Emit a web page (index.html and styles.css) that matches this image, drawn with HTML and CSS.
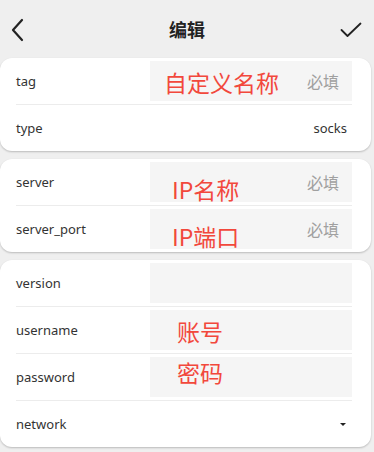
FILE: index.html
```html
<!DOCTYPE html>
<html lang="zh-CN">
<head>
    <meta charset="UTF-8">
    <meta name="viewport" content="width=device-width, initial-scale=1.0">
    <title>编辑</title>
    <link rel="stylesheet" href="styles.css">
</head>
<body>
    <!-- Barra superior -->
    <div class="topbar">
        <svg class="back" width="14" height="24" viewBox="0 0 14 24"><path d="M12 2 L3 12 L12 22" fill="none" stroke="#222" stroke-width="2.2" stroke-linecap="round" stroke-linejoin="round"/></svg>
        <span class="title">编辑</span>
        <svg class="done" width="22" height="16" viewBox="0 0 22 16"><path d="M1.5 8 L7.5 14 L20.5 1.5" fill="none" stroke="#222" stroke-width="1.8" stroke-linecap="round" stroke-linejoin="round"/></svg>
    </div>

    <div class="card">
        <div class="row">
            <span class="label">tag</span>
            <div class="field"><span class="note note-big">自定义名称</span><span class="hint">必填</span></div>
        </div>
        <div class="row">
            <span class="label">type</span>
            <span class="value">socks</span>
        </div>
    </div>

    <div class="card">
        <div class="row">
            <span class="label">server</span>
            <div class="field"><span class="note note-ip note-low">IP名称</span><span class="hint">必填</span></div>
        </div>
        <div class="row">
            <span class="label">server_port</span>
            <div class="field"><span class="note note-ip note-low">IP端口</span><span class="hint">必填</span></div>
        </div>
    </div>

    <div class="card">
        <div class="row">
            <span class="label">version</span>
            <div class="field"></div>
        </div>
        <div class="row">
            <span class="label">username</span>
            <div class="field"><span class="note note-user">账号</span></div>
        </div>
        <div class="row">
            <span class="label">password</span>
            <div class="field"><span class="note note-user note-high">密码</span></div>
        </div>
        <div class="row">
            <span class="label">network</span>
            <span class="caret"></span>
        </div>
    </div>
</body>
</html>
```

FILE: styles.css
```css
body {
    margin: 0;
    background-color: #efefef;
    font-family: "Noto Sans", "Noto Sans CJK SC", sans-serif;
    color: #333;
    overflow: hidden;
}

.topbar {
    height: 58px;
    display: flex;
    align-items: center;
    justify-content: space-between;
    padding: 0 12px 0 10px;
    position: relative;
}

.back {
    margin-top: 1px;
}

.title {
    position: absolute;
    left: 0;
    right: 0;
    text-align: center;
    font-family: "Noto Sans CJK SC", sans-serif;
    font-size: 18px;
    font-weight: bold;
    color: #222;
    pointer-events: none;
}

.done {
    margin-top: 1px;
}

.card {
    background-color: #fff;
    border-radius: 12px;
    margin: 0 3px 8px 0;
    box-shadow: 0 1px 2px rgba(0, 0, 0, 0.22);
}

.row {
    display: flex;
    align-items: center;
    justify-content: space-between;
    margin: 0 19px 0 16px;
    height: 46px;
    border-bottom: 1px solid #ececec;
}

.row:last-child {
    border-bottom: none;
}

.label {
    font-size: 13px;
    color: #333;
}

.value {
    font-size: 13px;
    color: #333;
    margin-right: 5px;
}

.field {
    width: 202px;
    height: 40px;
    background-color: #f5f5f5;
    display: flex;
    align-items: center;
    justify-content: space-between;
    box-sizing: border-box;
    padding: 0 13px 0 0;
}

.hint {
    font-family: "Noto Sans CJK SC", sans-serif;
    font-size: 16px;
    color: #a0a0a0;
    margin-left: auto;
}

.note {
    font-family: "Noto Sans CJK SC", sans-serif;
    color: #f2483c;
    font-size: 23px;
    line-height: 1;
}

.note-big {
    margin-left: 14px;
    margin-top: 2px;
}

.note-ip {
    margin-left: 22px;
}

.note-low {
    margin-top: 14px;
}

.note-user {
    margin-left: 27px;
    margin-top: 2px;
}

.note-high {
    margin-top: -9px;
}

.caret {
    width: 0;
    height: 0;
    border-left: 3.5px solid transparent;
    border-right: 3.5px solid transparent;
    border-top: 3.5px solid #222;
    margin-right: 6px;
}
```
